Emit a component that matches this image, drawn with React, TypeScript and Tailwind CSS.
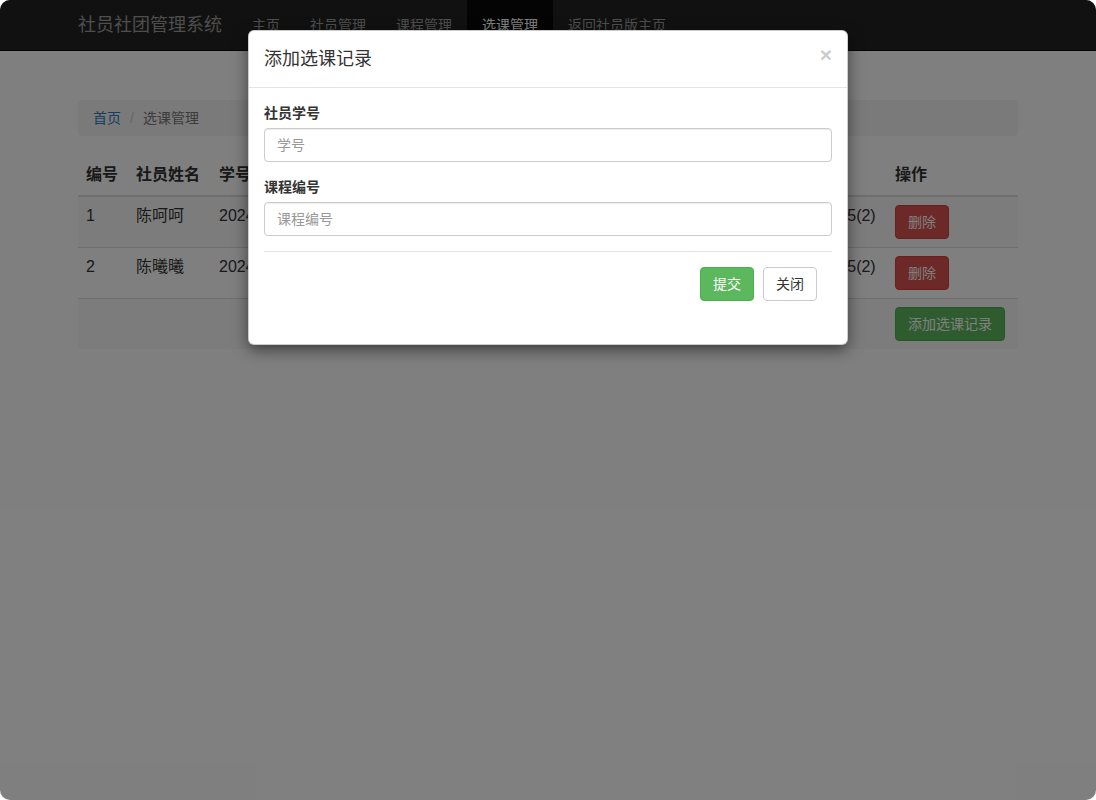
import React from "react";

const font = "font-['Liberation_Sans','Noto_Sans_CJK_SC',sans-serif]";

const navItems = ["主页", "社员管理", "课程管理", "选课管理", "返回社员版主页"];

const rows = [
    { id: "1", name: "陈呵呵", sno: "2024010101", cno: "C1001", cname: "Python程序设计", time: "周一3-5(2)" },
    { id: "2", name: "陈曦曦", sno: "2024010102", cno: "C1002", cname: "数据结构", time: "周三3-5(2)" },
];

function Navbar() {
    return (
        <nav className="h-[51px] bg-[#222] border-b border-[#080808]">
            <div className="w-[970px] mx-auto px-[15px] flex">
                <span className="h-[50px] px-[15px] -ml-[15px] text-[18px] leading-[20px] py-[15px] text-[#9d9d9d]">
                    社员社团管理系统
                </span>
                <ul className="flex">
                    {navItems.map((item) => (
                        <li
                            key={item}
                            className={
                                item === "选课管理"
                                    ? "px-[15px] py-[15px] text-[14px] leading-[20px] text-white bg-[#080808]"
                                    : "px-[15px] py-[15px] text-[14px] leading-[20px] text-[#9d9d9d]"
                            }
                        >
                            {item}
                        </li>
                    ))}
                </ul>
            </div>
        </nav>
    );
}

function DeleteButton() {
    return (
        <button className="h-[34px] px-[12px] text-[14px] leading-[20px] text-white bg-[#d9534f] border border-[#d43f3a] rounded-[4px]">
            删除
        </button>
    );
}

function CourseTable() {
    return (
        <table className="w-full table-fixed border-collapse text-[16px] leading-[1.42857] text-[#333]">
            <thead>
                <tr className="border-b-2 border-[#ddd]">
                    <th className="w-[50px] p-[8px] text-left font-bold">编号</th>
                    <th className="w-[83px] p-[8px] text-left font-bold">社员姓名</th>
                    <th className="w-[170px] p-[8px] text-left font-bold">学号</th>
                    <th className="w-[150px] p-[8px] text-left font-bold">课程编号</th>
                    <th className="p-[8px] text-left font-bold">课程名称</th>
                    <th className="w-[94px] p-[8px] text-left font-bold">时间</th>
                    <th className="w-[131px] p-[8px] text-left font-bold">操作</th>
                </tr>
            </thead>
            <tbody>
                {rows.map((r, i) => (
                    <tr key={r.id} className={i % 2 === 0 ? "border-t border-[#ddd] bg-[#f9f9f9]" : "border-t border-[#ddd]"}>
                        <td className="p-[8px] align-top">{r.id}</td>
                        <td className="p-[8px] align-top">{r.name}</td>
                        <td className="p-[8px] align-top">{r.sno}</td>
                        <td className="p-[8px] align-top">{r.cno}</td>
                        <td className="p-[8px] align-top">{r.cname}</td>
                        <td className="p-[8px] align-top whitespace-nowrap">{r.time}</td>
                        <td className="p-[8px] align-top">
                            <DeleteButton />
                        </td>
                    </tr>
                ))}
                <tr className="border-t border-[#ddd] bg-[#f9f9f9]">
                    <td className="p-[8px]" colSpan={6}></td>
                    <td className="p-[8px] align-top">
                        <button className="h-[34px] px-[12px] text-[14px] leading-[20px] text-white bg-[#5cb85c] border border-[#4cae4c] rounded-[4px] whitespace-nowrap">
                            添加选课记录
                        </button>
                    </td>
                </tr>
            </tbody>
        </table>
    );
}

function AddModal() {
    return (
        <div className="absolute top-[30px] left-[248px] w-[600px] bg-white border border-black/20 rounded-[6px] shadow-[0_5px_15px_rgba(0,0,0,0.5)] text-[#333]">
            <div className="flex items-start justify-between px-[15px] pt-[16px] pb-[14px] border-b border-[#e5e5e5]">
                <h4 className="text-[18px] leading-[1.42857]">添加选课记录</h4>
                <span className="text-[21px] leading-[1] font-bold text-black opacity-20 -mt-[3px]">×</span>
            </div>
            <div className="px-[15px] pt-[15px] pb-[28px]">
                <div className="mb-[15px]">
                    <label className="block mb-[5px] text-[14px] leading-[20px] font-bold">社员学号</label>
                    <input
                        placeholder="学号"
                        className="block w-full h-[34px] px-[12px] text-[14px] border border-[#ccc] rounded-[4px] shadow-[inset_0_1px_1px_rgba(0,0,0,0.075)] placeholder:text-[#999] outline-none"
                    />
                </div>
                <div className="mb-[15px]">
                    <label className="block mb-[5px] text-[14px] leading-[20px] font-bold">课程编号</label>
                    <input
                        placeholder="课程编号"
                        className="block w-full h-[34px] px-[12px] text-[14px] border border-[#ccc] rounded-[4px] shadow-[inset_0_1px_1px_rgba(0,0,0,0.075)] placeholder:text-[#999] outline-none"
                    />
                </div>
                <hr className="border-0 border-t border-[#e5e5e5]" />
                <div className="flex justify-end gap-[9px] p-[15px]">
                    <button className="h-[34px] px-[12px] text-[14px] leading-[20px] text-white bg-[#5cb85c] border border-[#4cae4c] rounded-[4px]">
                        提交
                    </button>
                    <button className="h-[34px] px-[12px] text-[14px] leading-[20px] text-[#333] bg-white border border-[#ccc] rounded-[4px]">
                        关闭
                    </button>
                </div>
            </div>
        </div>
    );
}

export default function App() {
    return (
        <div className={`relative w-[1096px] h-[800px] overflow-hidden rounded-[10px] bg-white ${font}`}>
            <Navbar />
            <div className="w-[970px] mx-auto px-[15px] pt-[49px]">
                <ol className="flex items-center h-[36px] px-[15px] mb-[20px] bg-[#f5f5f5] rounded-[4px] text-[14px] leading-[20px]">
                    <li className="text-[#337ab7]">首页</li>
                    <li className="px-[9px] text-[#ccc]">/</li>
                    <li className="text-[#777]">选课管理</li>
                </ol>
                <CourseTable />
            </div>
            <div className="absolute inset-0 bg-black/50" />
            <AddModal />
        </div>
    );
}
